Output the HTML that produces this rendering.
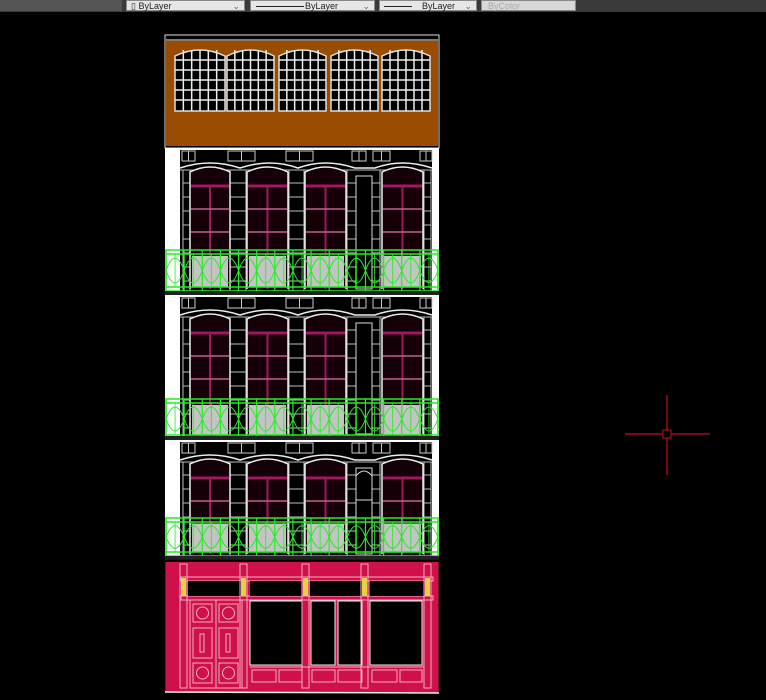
<!DOCTYPE html>
<html><head><style>
html,body{margin:0;padding:0;background:#000;width:766px;height:700px;overflow:hidden;font-family:"Liberation Sans",sans-serif}
.tb{position:absolute;left:0;top:0;width:766px;height:12px;background:#3a3a3a}
.dd{position:absolute;top:0;height:11px;background:#e6e6e6;font-size:9px;line-height:10px;color:#222;border:1px solid #888;box-sizing:border-box}
</style></head><body>
<div class="tb">
 <div style="position:absolute;left:0;top:0;width:122px;height:11px;background:#555"></div>
 <div class="dd" style="left:126px;width:119px;padding-left:4px">▯ ByLayer<span style="position:absolute;right:4px;color:#666">⌄</span></div>
 <div class="dd" style="left:250px;width:125px"><span style="position:absolute;left:5px;top:5px;width:48px;height:1px;background:#222"></span><span style="position:absolute;left:54px">ByLayer</span><span style="position:absolute;right:4px;color:#666">⌄</span></div>
 <div class="dd" style="left:379px;width:98px"><span style="position:absolute;left:4px;top:5px;width:28px;height:1px;background:#222"></span><span style="position:absolute;left:42px">ByLayer</span><span style="position:absolute;right:4px;color:#666">⌄</span></div>
 <div class="dd" style="left:481px;width:95px;background:#d8d8d8;color:#aaa;padding-left:6px">ByColor</div>
</div>
<svg id="s" width="766" height="700" style="position:absolute;left:0;top:0" xmlns="http://www.w3.org/2000/svg"></svg>
<script>
var o='';
function r(x,y,w,h,f,s,sw){o+='<rect x="'+x+'" y="'+y+'" width="'+w+'" height="'+h+'" fill="'+(f||'none')+'"'+(s?' stroke="'+s+'" stroke-width="'+(sw||1)+'"':'')+'/>';}
function l(x1,y1,x2,y2,s,sw){o+='<line x1="'+x1+'" y1="'+y1+'" x2="'+x2+'" y2="'+y2+'" stroke="'+s+'" stroke-width="'+(sw||1)+'"/>';}
function p(d,f,s,sw){o+='<path d="'+d+'" fill="'+(f||'none')+'"'+(s?' stroke="'+s+'" stroke-width="'+(sw||1)+'"':'')+'/>';}
r(165,35,274,113,'#000','#ddd',1);
r(166,41,272,105,'#9a4d00');
l(166,40,438,40,'#bba080',1.5);
var aw=[[175,225],[227,274],[279,326],[331,378],[382,430]];
aw.forEach(function(a){var x=a[0],w=a[1]-a[0],y=48,b=111;
 p('M'+x+' '+b+' L'+x+' 56 Q'+(x+w/2)+' 44 '+(x+w)+' 56 L'+(x+w)+' '+b+' Z','#000','#ddd',1.5);
 for(var i=1;i<6;i++){l(x+w*i/6,50,x+w*i/6,b,'#eee',1.5);}
 [60,70,80,90,100].forEach(function(yy){l(x,yy,x+w,yy,'#eee',1.5);});
});
function floor(y0,h,balY,balH,midArch){
 r(165,y0,274,h,'#fff');
 r(180,y0+2,252,h-2,'#000');
 [[182,195],[228,255],[286,313],[352,366],[373,390],[420,432]].forEach(function(b){r(b[0],y0+3,b[1]-b[0],10,'none','#ccc',1);l((b[0]+b[1])/2,y0+3,(b[0]+b[1])/2,y0+13,'#ccc');});
 p('M180 '+(y0+20)+' Q210 '+(y0+10)+' 240 '+(y0+20)+' Q270 '+(y0+10)+' 298 '+(y0+20)+' Q325 '+(y0+10)+' 355 '+(y0+20)+' L375 '+(y0+20)+' Q402 '+(y0+10)+' 432 '+(y0+20),'none','#eee',1.5);
 l(180,y0+22,432,y0+22,'#bbb');
 [[183,190],[230,246],[289,304],[347,380],[424,431]].forEach(function(q){r(q[0],y0+22,q[1]-q[0],h-22,'none','#bbb',1);for(var yy=y0+35;yy<y0+h;yy+=14)l(q[0],yy,q[1],yy,'#bbb');});
 var ws=[[190,230],[247,288],[305,346],[382,423]];
 ws.forEach(function(a){var x=a[0],w=a[1]-a[0],t=y0+18,b=y0+h-4;
  p('M'+x+' '+b+' L'+x+' '+(t+6)+' Q'+(x+w/2)+' '+(t-4)+' '+(x+w)+' '+(t+6)+' L'+(x+w)+' '+b,'#140006','#eee',1.5);
  l(x+1,t+20,x+w-1,t+20,'#a01860',3);
  l(x+w/2,t+20,x+w/2,b,'#a01860',2);
  l(x+1,t+43,x+w-1,t+43,'#c06090',1.5);
  l(x+1,t+66,x+w-1,t+66,'#c06090',1.5);
  r(x+2,balY+6,w-4,balH-10,'#c4c4c4');
 });
 r(356,y0+28,16,h-32,'#000','#ddd',1);
 if(midArch){p('M356 '+(y0+60)+' L356 '+(y0+36)+' Q364 '+(y0+26)+' 372 '+(y0+36)+' L372 '+(y0+60)+' Z','#000','#ddd',1);}
 var g='#22ee22';
 r(166,balY,272,balH,'none',g,1.5);
 l(166,balY+4,438,balY+4,g,1.5);
 l(166,balY+balH-4,438,balY+balH-4,g,1.5);
 for(var k=0;k<15;k++){
  var x=166+k*272/15, sw=272/15;
  l(x,balY,x,balY+balH,g,1.2);
  var cx=x+sw/2,cy=balY+balH/2,rr=balH/2-5;
  p('M'+x+' '+cy+' Q'+cx+' '+(cy-rr*1.6)+' '+(x+sw)+' '+cy+' Q'+cx+' '+(cy+rr*1.6)+' '+x+' '+cy,'none',g,1);
  l(cx,balY+4,cx,balY+balH-4,g,0.8);
 }
 l(438,balY,438,balY+balH,g,1.2);
 r(165,y0+h-2,274,6,'#222');
 l(165,y0+h+3,439,y0+h+3,'#aaa');
}
floor(148,145,250,41,false);
floor(295,143,399,40,false);
floor(440,118,518,38,true);
var R='#d0104a',P='#f0b0c0';
r(165,560,274,133,R,'#111',1);
l(165,561,439,561,'#000',2);
r(181,577,252,4,'none',P,1);
r(181,596,252,4,'none',P,1);
[[188,242],[250,302],[310,362],[370,424]].forEach(function(a){r(a[0],581,a[1]-a[0],15,'#000');});
[[250,302],[311,335],[338,362],[370,422]].forEach(function(a){r(a[0],601,a[1]-a[0],64,'#000','#eee',1);});
[183,243,305,364,427].forEach(function(x){r(x-3,564,7,124,'none',P,1);r(x-2,578,5,18,'#e8d040');});
r(190,600,52,88,'none',P,1);l(216,600,216,688,P);
[193,219].forEach(function(x){r(x,604,19,18,'none',P,1);o+='<circle cx="'+(x+9.5)+'" cy="613" r="6" fill="none" stroke="'+P+'"/>';
 r(x,628,19,30,'none',P,1);r(x+7,634,4,18,'none',P,1);
 r(x,663,19,20,'none',P,1);o+='<circle cx="'+(x+9.5)+'" cy="673" r="6" fill="none" stroke="'+P+'"/>';});
[[252,276],[279,302],[312,335],[338,362],[372,397],[400,422]].forEach(function(a){r(a[0],670,a[1]-a[0],12,'none',P,1);});
l(250,667,424,667,P);
l(165,692,439,693,'#eee',1.5);
l(625,434,710,434,'#c01020',1.2);l(667,395,667,475,'#c01020',1.2);
r(663,430,8,8,'#000','#c01020',1);
document.getElementById('s').innerHTML=o;
</script>
</body></html>
